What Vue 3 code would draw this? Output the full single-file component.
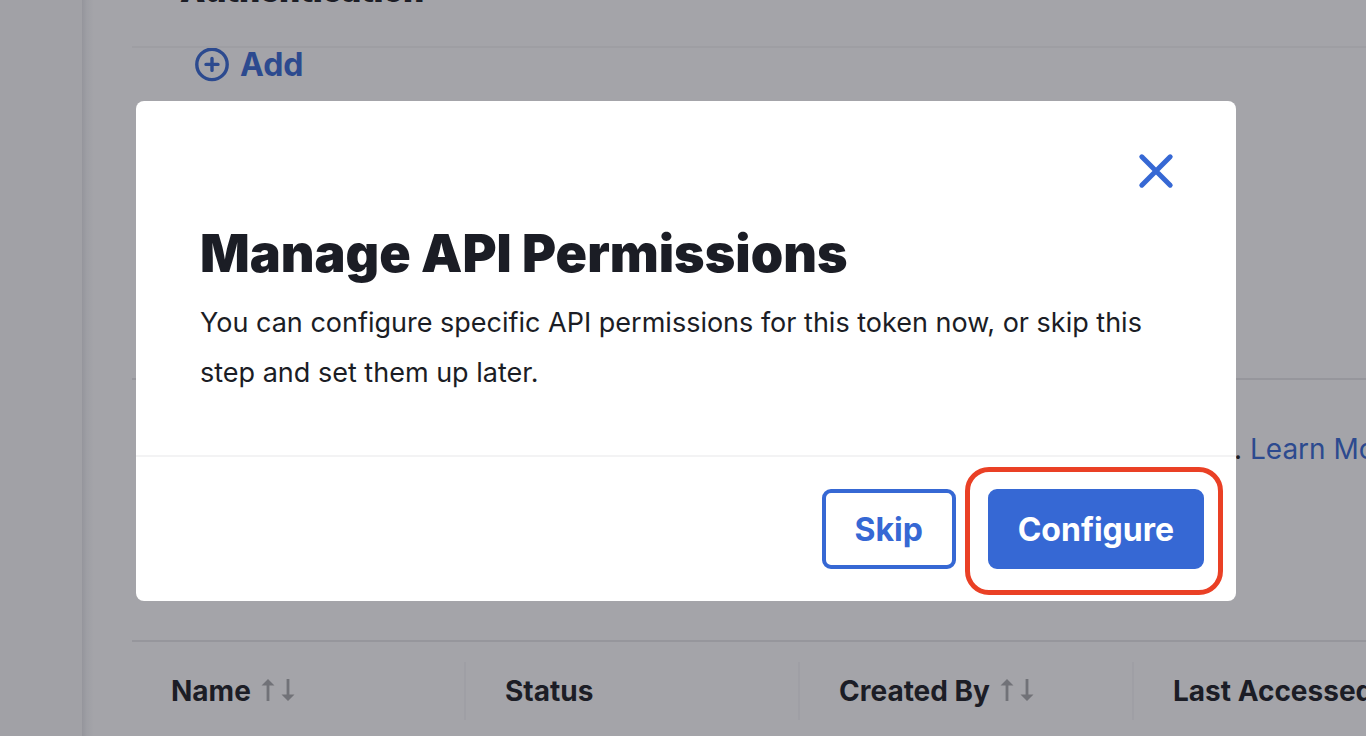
<script setup>
const columns = [
  { label: 'Name', sortable: true },
  { label: 'Status', sortable: false },
  { label: 'Created By', sortable: true },
  { label: 'Last Accessed', sortable: false },
]
</script>

<template>
  <div class="page">
    <aside class="sidebar"></aside>
    <main class="content">
      <h2 class="section-title">Authentication</h2>
      <section class="add-section">
        <button class="add" type="button">
          <svg width="34" height="34" viewBox="0 0 34 34" fill="none" stroke="currentColor" stroke-width="3.4" aria-hidden="true">
            <circle cx="17" cy="16.4" r="15.2" />
            <path d="M17 10.4v12M11 16.4h12" stroke-linecap="round" />
          </svg>
          Add
        </button>
      </section>
      <section class="note-section">
        <p class="note">. <a href="#">Learn More</a></p>
      </section>
      <table class="tokens">
        <thead>
          <tr>
            <th v-for="column in columns" :key="column.label" scope="col">
              <div class="cell">
                {{ column.label }}
                <svg v-if="column.sortable" class="sort" width="34" height="24" viewBox="0 0 34 24" fill="currentColor" aria-hidden="true">
                  <path d="M7 0L13.5 6.5H8.4V22H5.6V6.5H.5z" />
                  <path d="M27 22L20.5 15.5H25.6V0H28.4V15.5H33.5z" />
                </svg>
              </div>
            </th>
          </tr>
        </thead>
      </table>
    </main>
  </div>

  <div class="overlay">
    <div class="modal" role="dialog" aria-modal="true" aria-labelledby="modal-title">
      <div class="modal-top">
        <button class="close" type="button" aria-label="Close">
          <svg width="36" height="36" viewBox="0 0 36 36" fill="none" stroke="currentColor" stroke-width="5" stroke-linecap="round" aria-hidden="true">
            <path d="M3.8 3.8l28.4 28.4M32.2 3.8L3.8 32.2" />
          </svg>
        </button>
      </div>
      <div class="modal-body">
        <h1 id="modal-title">Manage API Permissions</h1>
        <p>You can configure specific API permissions for this token now, or skip this step and set them up later.</p>
      </div>
      <footer class="modal-footer">
        <button class="btn secondary" type="button">Skip</button>
        <div class="highlight">
          <button class="btn primary" type="button">Configure</button>
        </div>
      </footer>
    </div>
  </div>
</template>

<style>
body {
  overflow: hidden;
}
</style>

<style scoped>
.page,
.overlay {
  font-family: Inter, "Liberation Sans", sans-serif;
  color: #1b1d25;
}

.page {
  display: flex;
  height: 100vh;
  overflow: hidden;
  background: #fefeff;
}

.sidebar {
  flex: 0 0 82px;
  background: #f8f9fb;
}

.content {
  flex: 1;
  min-width: 0;
  padding-left: 50px;
  background: linear-gradient(to right, #e4e5e9, #f4f5f8 5px, #fefeff 12px);
}

.section-title {
  margin: -25px 0 0;
  padding: 0 0 39px 48px;
  border-bottom: 2px solid #f3f4f6;
  font-size: 32px;
  line-height: 32px;
  font-weight: 900;
}

.add-section {
  height: 330px;
  padding-left: 63px;
  border-bottom: 2px solid #e6e7ea;
}

.add {
  display: flex;
  align-items: center;
  gap: 11px;
  padding: 0;
  border: 0;
  background: none;
  color: #3668d4;
  font: 700 32px/34px Inter, "Liberation Sans", sans-serif;
}

.note-section {
  height: 260px;
  border-bottom: 2px solid #e6e7ea;
}

.note {
  margin: 0;
  padding: 49px 0 0 1102px;
  font-size: 28px;
  line-height: 40px;
  white-space: nowrap;
}

.note a {
  color: #3668d4;
  text-decoration: none;
}

.tokens {
  width: 1336px;
  table-layout: fixed;
  border-collapse: collapse;
}

.tokens th {
  padding: 20px 0 16px;
  font-size: 28px;
  font-weight: 700;
  text-align: left;
  white-space: nowrap;
}

.cell {
  display: flex;
  align-items: center;
  gap: 10px;
  height: 58px;
  padding-left: 39px;
  border-right: 2px solid #f5f6f8;
}

.sort {
  color: #a9aaad;
}

.overlay {
  position: fixed;
  inset: 0;
  padding: 101px 130px 0 136px;
  background: rgba(29, 31, 39, 0.4);
}

.modal {
  max-width: 1100px;
  border-radius: 8px;
  background: #fff;
}

.modal-top {
  display: flex;
  justify-content: flex-end;
  padding: 52px 62px 0;
}

.close {
  display: flex;
  padding: 0;
  border: 0;
  background: none;
  color: #3668d4;
}

.modal-body {
  padding: 33px 64px 57px;
}

.modal-body h1 {
  margin: 0;
  font-size: 52px;
  line-height: 64px;
  font-weight: 900;
}

.modal-body p {
  margin: 12px 0 0;
  font-size: 27px;
  line-height: 50px;
}

.modal-footer {
  display: flex;
  justify-content: flex-end;
  gap: 32px;
  padding: 32px;
  border-top: 2px solid #f3f3f4;
}

.highlight {
  position: relative;
}

.highlight::after {
  content: "";
  position: absolute;
  inset: -22px -19px -26px -23px;
  border: 5px solid #ea4025;
  border-radius: 24px;
  pointer-events: none;
}

.btn {
  display: block;
  height: 80px;
  min-width: 134px;
  padding: 2px 26px 0;
  border: 4px solid #3668d4;
  border-radius: 9px;
  font: 700 32px/40px Inter, "Liberation Sans", sans-serif;
}

.secondary {
  background: #fff;
  color: #3668d4;
}

.primary {
  background: #3668d4;
  color: #fff;
}
</style>
